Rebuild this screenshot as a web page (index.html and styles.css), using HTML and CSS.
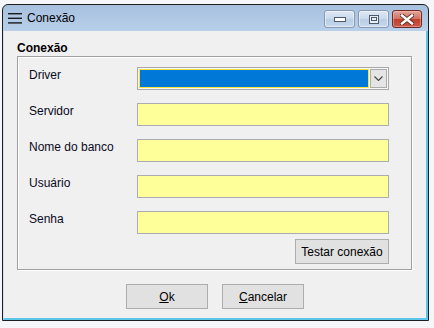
FILE: index.html
```html
<!DOCTYPE html>
<html lang="pt">
<head>
    <meta charset="UTF-8">
    <title>Conexão</title>
    <link rel="stylesheet" href="styles.css">
</head>
<body>

<div class="window">
    <div class="titlebar">
        <svg class="menu-icon" width="14" height="11" viewBox="0 0 14 11">
            <rect x="0" y="0" width="14" height="1.4" fill="#1c1c1c"/>
            <rect x="0" y="4.6" width="14" height="1.4" fill="#1c1c1c"/>
            <rect x="0" y="9.2" width="14" height="1.4" fill="#1c1c1c"/>
        </svg>
        <span class="title">Conexão</span>
        <div class="caption-buttons">
            <div class="cap-btn">
                <svg width="12" height="5" viewBox="0 0 12 5">
                    <rect x="0.5" y="0.5" width="11" height="4" fill="#fff" stroke="#4e5a6a"/>
                </svg>
            </div>
            <div class="cap-btn">
                <svg width="10" height="9" viewBox="0 0 10 9">
                    <rect x="0.5" y="0.5" width="9" height="8" fill="#e8eef6" stroke="#4e5a6a"/>
                    <rect x="2.5" y="2.5" width="5" height="3" fill="none" stroke="#4e5a6a"/>
                </svg>
            </div>
            <div class="cap-btn close">
                <svg width="14" height="11" viewBox="0 0 14 11">
                    <path d="M2 1.5 L12 9.5 M12 1.5 L2 9.5" stroke="#5d2a24" stroke-width="4.2" stroke-linecap="square"/>
                    <path d="M2 1.5 L12 9.5 M12 1.5 L2 9.5" stroke="#fff" stroke-width="2.4" stroke-linecap="square"/>
                </svg>
            </div>
        </div>
    </div>

    <div class="client">
        <div class="group-title">Conexão</div>
        <div class="group-box">
            <div class="form-grid">
                <label>Driver</label>
                <div class="combo">
                    <div class="combo-value"></div>
                    <div class="combo-arrow">
                        <svg width="9" height="5" viewBox="0 0 9 5">
                            <path d="M0.5 0.5 L4.5 4.5 L8.5 0.5" fill="none" stroke="#444" stroke-width="1.1"/>
                        </svg>
                    </div>
                </div>

                <label>Servidor</label>
                <input type="text" class="field">

                <label>Nome do banco</label>
                <input type="text" class="field">

                <label>Usuário</label>
                <input type="text" class="field">

                <label>Senha</label>
                <input type="password" class="field">
            </div>
            <div class="test-row">
                <button class="btn test-btn">Testar conexão</button>
            </div>
        </div>

        <div class="footer">
            <button class="btn"><u>O</u>k</button>
            <button class="btn"><u>C</u>ancelar</button>
        </div>
    </div>
</div>

</body>
</html>
```

FILE: styles.css
```css
body {
    margin: 0;
    background-color: #f4f6f9;
    font-family: "Liberation Sans", Arial, sans-serif;
    font-size: 12px;
    color: #000;
}

.window {
    margin: 4px 0 0 2px;
    width: 427px;
    box-sizing: border-box;
    border: 1px solid #1e1e1e;
    border-radius: 6px 6px 0 0;
    background: linear-gradient(#a6c0de, #bcd2ec 30px, #c3d7ee);
}

.titlebar {
    height: 26px;
    display: flex;
    align-items: flex-start;
    padding: 0 6px 0 5px;
}

.menu-icon {
    margin-top: 8px;
}

.title {
    margin-left: 5px;
    margin-top: 6px;
    font-size: 12px;
    line-height: 14px;
    color: #000;
}

.caption-buttons {
    margin-left: auto;
    margin-top: 5px;
    display: flex;
    gap: 3px;
}

.cap-btn {
    width: 31px;
    height: 18px;
    box-sizing: border-box;
    border: 1px solid #8798b0;
    border-radius: 3px;
    background: linear-gradient(#dde8f5, #c9d9ec 50%, #b9cde5 51%, #c7d8ec);
    display: flex;
    align-items: center;
    justify-content: center;
    box-shadow: inset 0 0 0 1px rgba(255, 255, 255, 0.5);
}

.cap-btn.close {
    width: 30px;
    border-color: #6e2a22;
    background: linear-gradient(#e3a59a, #d0705f 50%, #bf3f2c 51%, #c8584a);
    box-shadow: inset 0 0 0 1px rgba(255, 200, 190, 0.45);
}

.client {
    background-color: #f0f0f0;
    border-left: 1px solid #d3e2f3;
    border-right: 2px solid #5cc6ea;
    border-bottom: 2px solid #5cc6ea;
    padding: 9px 0 9px 0;
}

.group-title {
    margin-left: 13px;
    font-weight: bold;
    line-height: 16px;
}

.group-box {
    margin-left: 13px;
    width: 395px;
    box-sizing: border-box;
    border: 1px solid #a0a0a0;
    box-shadow: 1px 1px 0 #fff, inset 1px 1px 0 #fff;
    padding: 10px 0 5px 11px;
}

.form-grid {
    display: grid;
    grid-template-columns: 108px 252px;
    row-gap: 13px;
}

.form-grid label {
    line-height: 14px;
    padding-top: 1px;
    color: #0a0a1e;
}

.field {
    height: 23px;
    width: 252px;
    box-sizing: border-box;
    margin: 0;
    border: 1px solid #abadb3;
    background-color: #ffff99;
    outline: none;
}

.combo {
    height: 23px;
    width: 252px;
    box-sizing: border-box;
    border: 1px solid #a9a9a9;
    background-color: #f7f7f7;
    padding: 1px;
    display: flex;
    gap: 1px;
}

.combo-value {
    flex: 1;
    background-color: #0078d7;
    border: 1px solid #f5e23a;
}

.combo-arrow {
    width: 17px;
    box-sizing: border-box;
    border: 1px solid #acacac;
    background-color: #e5e5e5;
    display: flex;
    align-items: center;
    justify-content: center;
}

.test-row {
    display: flex;
    justify-content: flex-end;
    width: 360px;
    margin-top: 5px;
}

.btn {
    height: 25px;
    width: 82px;
    box-sizing: border-box;
    border: 1px solid #adadad;
    background-color: #e1e1e1;
    font-family: "Liberation Sans", Arial, sans-serif;
    font-size: 12px;
    color: #000;
    padding: 0;
}

.test-btn {
    width: 94px;
}

.footer {
    display: flex;
    justify-content: center;
    gap: 14px;
    margin-top: 14px;
}
```
